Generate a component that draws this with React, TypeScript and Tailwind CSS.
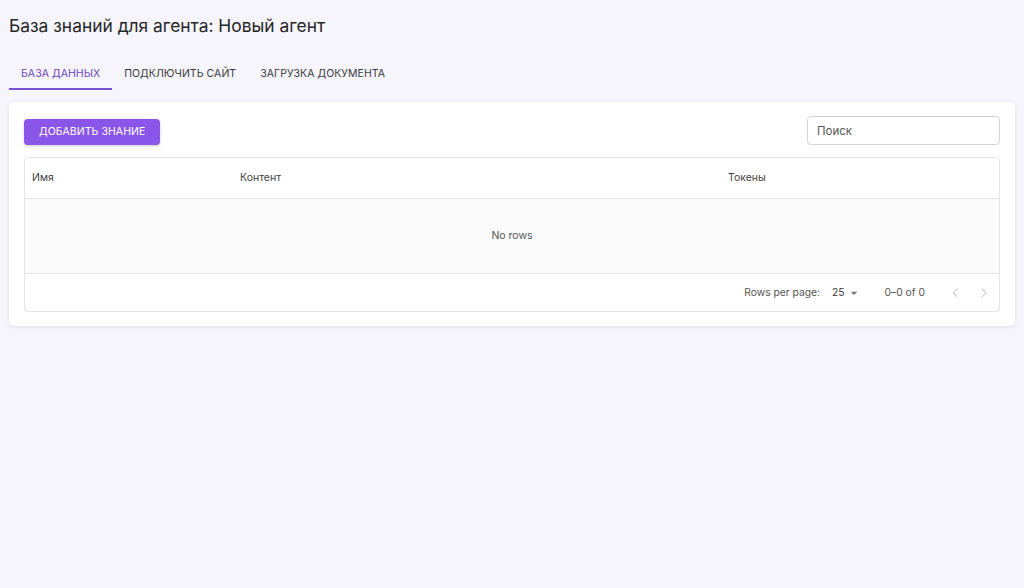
import { ChevronLeft, ChevronRight } from 'lucide-react';

const FONT = { fontFamily: 'Inter, "Noto Sans", sans-serif' };

const TABS = ['База данных', 'Подключить сайт', 'Загрузка документа'];

export default function App() {
  return (
    <div className="min-h-[588px] w-full bg-[#f6f5fc] px-[9px] pt-[14px] text-[#2b2b2b]" style={FONT}>
      <h1 className="text-[17.4px] leading-[24px] font-normal text-[#262626]">
        База знаний для агента: Новый агент
      </h1>

      <div className="mt-[22px] flex h-[30px] items-stretch">
        {TABS.map((tab, i) => (
          <button
            key={tab}
            className={`flex items-center px-[12px] text-[10.5px] font-normal uppercase tracking-[0.005em] ${
              i === 0
                ? 'border-b-2 border-[#7a4fd1] text-[#6c45bf]'
                : 'border-b-2 border-transparent text-[#3a3a3a]'
            }`}
          >
            {tab}
          </button>
        ))}
      </div>

      <div className="mt-[12px] rounded-[5px] bg-white px-[15px] pt-[14px] pb-[14px] shadow-[0_1px_4px_rgba(60,50,110,0.12)]">
        <div className="flex items-center justify-between">
          <button className="mt-[2px] h-[26px] rounded-[4px] bg-[#8a56ea] px-[15px] text-[10.5px] font-normal uppercase tracking-[0.005em] text-white shadow-[0_1px_3px_rgba(0,0,0,0.2)]">
            Добавить знание
          </button>
          <input
            placeholder="Поиск"
            className="h-[29px] w-[193px] rounded-[4px] border border-[#d4d4d8] px-[9px] text-[11.5px] text-[#333] placeholder:text-[#555] outline-none"
          />
        </div>

        <div className="mt-[12px] overflow-hidden rounded-[4px] border border-[#e4e4e7]">
          <div className="flex h-[40px] items-center text-[10.5px] text-[#3f3f3f]">
            <div className="w-[208px] pl-[7px]">Имя</div>
            <div className="w-[488px] pl-[7px]">Контент</div>
            <div className="pl-[7px]">Токены</div>
          </div>
          <div className="flex h-[76px] items-center justify-center border-y border-[#e4e4e7] bg-[#fbfbfc] text-[10.5px] text-[#555]">
            No rows
          </div>
          <div className="flex h-[37px] items-center justify-end pr-[7px] text-[10.3px] text-[#555]">
            <span>Rows per page:</span>
            <span className="ml-[12px] flex items-center text-[#333]">
              25
              <svg width="16" height="16" viewBox="0 0 24 24" className="ml-[1px]">
                <path d="M7 10l5 5 5-5z" fill="#757575" />
              </svg>
            </span>
            <span className="ml-[23px]">0–0 of 0</span>
            <span className="ml-[22px] flex items-center gap-[13px] text-[#bdbdbd]">
              <ChevronLeft size={16} strokeWidth={1.5} />
              <ChevronRight size={16} strokeWidth={1.5} />
            </span>
          </div>
        </div>
      </div>
    </div>
  );
}
